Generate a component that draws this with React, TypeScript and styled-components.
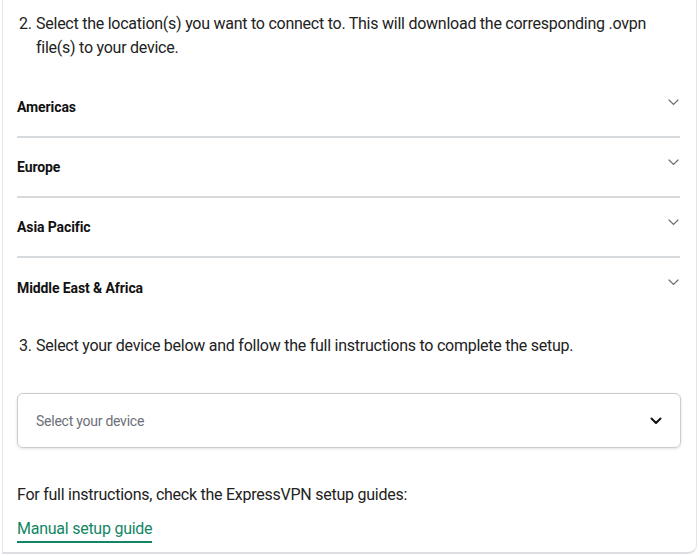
import React from 'react'
import styled, { createGlobalStyle } from 'styled-components'

const GlobalStyle = createGlobalStyle`
  html, body {
    margin: 0;
    padding: 0;
    background: #ffffff;
    font-family: Roboto, "Liberation Sans", Arial, sans-serif;
    letter-spacing: -0.25px;
    color: #1f1f1f;
  }
`

const Card = styled.div`
  box-sizing: border-box;
  width: 695px;
  height: 554px;
  margin-left: 2px;
  background: #ffffff;
  border: 1px solid #e3e5e8;
  border-top: none;
  border-bottom: 2px solid #dcdee1;
  border-bottom-right-radius: 9px;
  padding: 12px 14px 0 14px;
  overflow: hidden;
`

const Step = styled.div<{ $top?: number }>`
  display: flex;
  font-size: 16px;
  line-height: 24px;
  color: #222222;
  padding-left: 2px;
  margin-top: ${p => p.$top ?? 0}px;
`

const StepNum = styled.span`
  flex: none;
  width: 17px;
`

const StepText = styled.span`
  flex: 1;
  padding-right: 20px;
`

const Accordion = styled.div`
  margin-top: 18px;
`

const Row = styled.div<{ $last?: boolean }>`
  display: flex;
  align-items: center;
  justify-content: space-between;
  height: ${p => (p.$last ? 60 : 58)}px;
  border-bottom: ${p => (p.$last ? 'none' : '2px solid #d7dadd')};
  width: 663px;
  font-size: 14px;
  font-weight: 700;
  letter-spacing: -0.1px;
  color: #111111;
  position: relative;
`

const SmallChevron = styled.svg`
  position: absolute;
  right: 1px;
  top: 21px;
  width: 11px;
  height: 7px;
`

const SelectBox = styled.div`
  box-sizing: border-box;
  display: flex;
  align-items: center;
  justify-content: space-between;
  width: 664px;
  height: 55px;
  margin-top: 35px;
  padding: 0 18px 0 18px;
  border: 1px solid #c9ccd0;
  border-radius: 6px;
  box-shadow: 0 1px 3px rgba(0, 0, 0, 0.12);
  font-size: 14px;
  color: #6b7078;
`

const Info = styled.p`
  margin: 35px 0 0 0;
  font-size: 16px;
  line-height: 24px;
  color: #222222;
`

const GuideLink = styled.a`
  display: inline-block;
  margin-top: 11px;
  font-size: 16px;
  line-height: 22px;
  color: #138565;
  text-decoration: none;
  border-bottom: 2px solid #138565;
  padding-bottom: 1px;
`

const regions = ['Americas', 'Europe', 'Asia Pacific', 'Middle East & Africa']

export default function App() {
  return (
    <>
      <GlobalStyle />
      <Card>
        <Step>
          <StepNum>2.</StepNum>
          <StepText>
            Select the location(s) you want to connect to. This will download the corresponding .ovpn file(s) to
            your device.
          </StepText>
        </Step>
        <Accordion>
          {regions.map((r, i) => (
            <Row key={r} $last={i === regions.length - 1}>
              <span>{r}</span>
              <SmallChevron viewBox="0 0 11 7">
                <path d="M1 1l4.5 4.5L10 1" fill="none" stroke="#6a6d72" strokeWidth="1.2" strokeLinecap="round" />
              </SmallChevron>
            </Row>
          ))}
        </Accordion>
        <Step $top={16}>
          <StepNum>3.</StepNum>
          <StepText>Select your device below and follow the full instructions to complete the setup.</StepText>
        </Step>
        <SelectBox>
          <span>Select your device</span>
          <svg width="12" height="8" viewBox="0 0 12 8">
            <path d="M1.5 1.5L6 6l4.5-4.5" fill="none" stroke="#111" strokeWidth="2" strokeLinecap="round" strokeLinejoin="round" />
          </svg>
        </SelectBox>
        <Info>For full instructions, check the ExpressVPN setup guides:</Info>
        <GuideLink href="#">Manual setup guide</GuideLink>
      </Card>
    </>
  )
}
